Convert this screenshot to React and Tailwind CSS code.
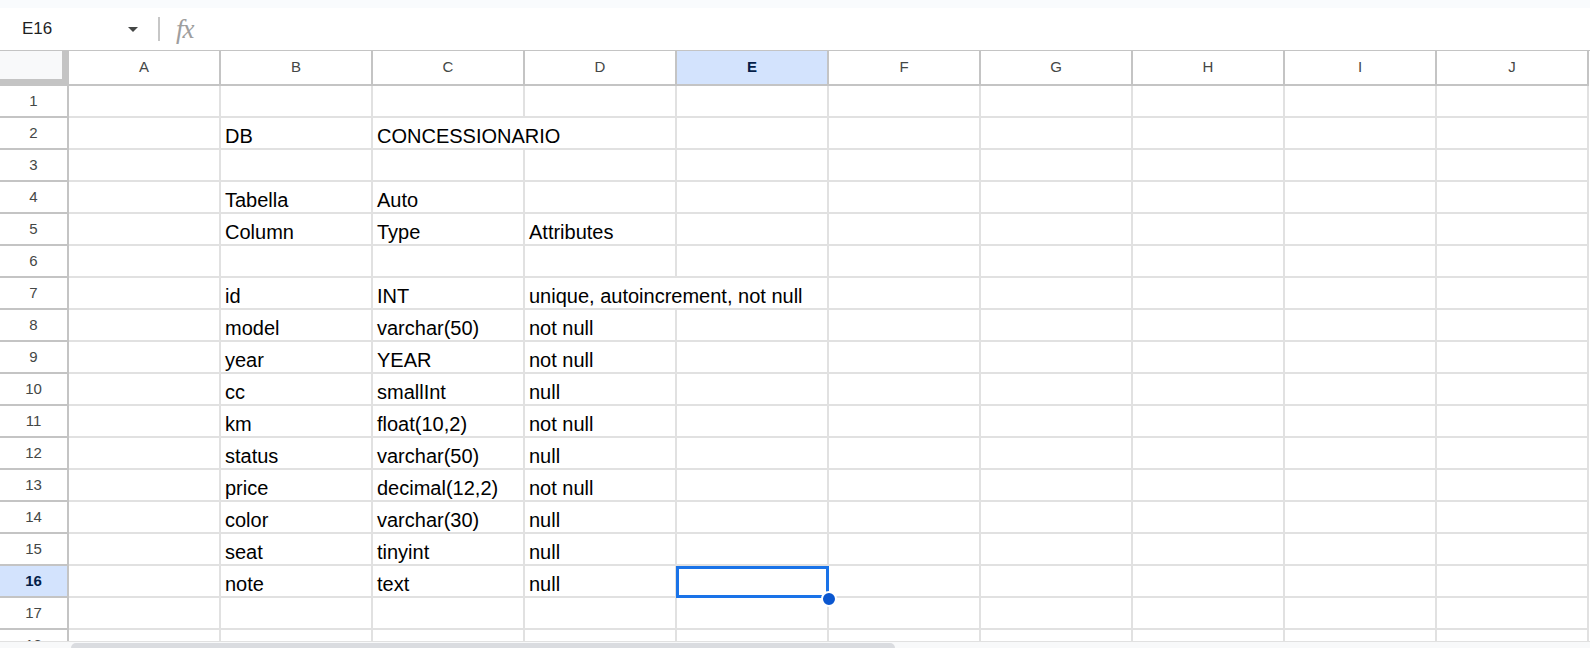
import React from "react";

const COLS = ["A", "B", "C", "D", "E", "F", "G", "H", "I", "J"];

const DATA = {
  2: { B: "DB", C: "CONCESSIONARIO" },
  4: { B: "Tabella", C: "Auto" },
  5: { B: "Column", C: "Type", D: "Attributes" },
  7: { B: "id", C: "INT", D: "unique, autoincrement, not null" },
  8: { B: "model", C: "varchar(50)", D: "not null" },
  9: { B: "year", C: "YEAR", D: "not null" },
  10: { B: "cc", C: "smallInt", D: "null" },
  11: { B: "km", C: "float(10,2)", D: "not null" },
  12: { B: "status", C: "varchar(50)", D: "null" },
  13: { B: "price", C: "decimal(12,2)", D: "not null" },
  14: { B: "color", C: "varchar(30)", D: "null" },
  15: { B: "seat", C: "tinyint", D: "null" },
  16: { B: "note", C: "text", D: "null" },
};

// text that spills into the next cell hides the grid line
const OVERFLOW = { 2: "C", 7: "D" };

const SEL_ROW = 16;
const SEL_COL = "E";

const rows = Array.from({ length: 18 }, (_, i) => i + 1);

const FormulaBar = () => (
  <div className="flex items-center h-[42px] shrink-0 bg-white">
    <div className="w-[128px] shrink-0 pl-[22px] text-[17px] text-[#1f1f1f]">E16</div>
    <svg width="10" height="5" viewBox="0 0 10 5" className="shrink-0">
      <path d="M0 0 L10 0 L5 5 Z" fill="#444746" />
    </svg>
    <div className="ml-[20px] w-[2px] h-[24px] bg-[#c7c7c7]" />
    <span className="ml-[16px] italic font-['Liberation_Serif',serif] text-[27px] leading-none text-[#9e9e9e] tracking-[-1px]">
      fx
    </span>
  </div>
);

const HeaderRow = () => (
  <div className="flex h-[35px] shrink-0">
    <div className="w-[69px] shrink-0 bg-[#f8f9fa] border-r-[7px] border-b-[7px] border-[#c4c4c4]" />
    {COLS.map((c) => {
      const active = c === SEL_COL;
      return (
        <div
          key={c}
          className={`w-[152px] shrink-0 flex items-center justify-center border-r-2 border-b-2 border-[#c4c4c4] text-[15px] ${
            active ? "bg-[#d3e3fd] font-bold text-[#041e49]" : "text-[#444746]"
          }`}
        >
          {c}
        </div>
      );
    })}
  </div>
);

const Row = ({ n }) => {
  const active = n === SEL_ROW;
  const cells = DATA[n] || {};
  return (
    <div className="flex h-[32px] shrink-0">
      <div
        className={`w-[69px] shrink-0 flex items-center justify-center border-r-2 border-b-2 border-[#c4c4c4] text-[15px] ${
          active ? "bg-[#d3e3fd] font-bold text-[#041e49]" : "text-[#444746]"
        }`}
      >
        {n}
      </div>
      {COLS.map((c) => {
        const spills = OVERFLOW[n] === c;
        const selected = active && c === SEL_COL;
        return (
          <div
            key={c}
            className={`relative w-[152px] shrink-0 flex items-end pl-[4px] border-b-2 border-[#e1e1e1] whitespace-nowrap text-[20px] leading-[23px] text-black ${
              spills ? "" : "border-r-2"
            }`}
          >
            {cells[c]}
            {selected && (
              <div className="absolute z-10 top-0 -left-px -right-[2px] -bottom-[2px] border-[3px] border-[#1a73e8]">
                <div className="absolute -right-[11px] -bottom-[12px] w-4 h-4 rounded-full bg-[#0b57d0] border-2 border-white" />
              </div>
            )}
          </div>
        );
      })}
    </div>
  );
};

export default function App() {
  return (
    <div className="w-[1590px] h-[648px] overflow-hidden bg-white flex flex-col font-['Liberation_Sans',Arial,sans-serif]">
      <div className="h-[8px] shrink-0 bg-[#f9fbfd]" />
      <FormulaBar />

      <div className="h-[591px] shrink-0 overflow-hidden border-t border-[#c4c4c4] flex flex-col">
        <HeaderRow />
        {rows.map((n) => (
          <Row key={n} n={n} />
        ))}
      </div>

      {/* horizontal scrollbar */}
      <div className="h-[7px] shrink-0 bg-[#f8f9fa] border-t border-[#e1e1e1] flex">
        <div className="ml-[71px] mt-[1px] w-[824px] h-[10px] rounded-full bg-[#dadce0]" />
      </div>
    </div>
  );
}
